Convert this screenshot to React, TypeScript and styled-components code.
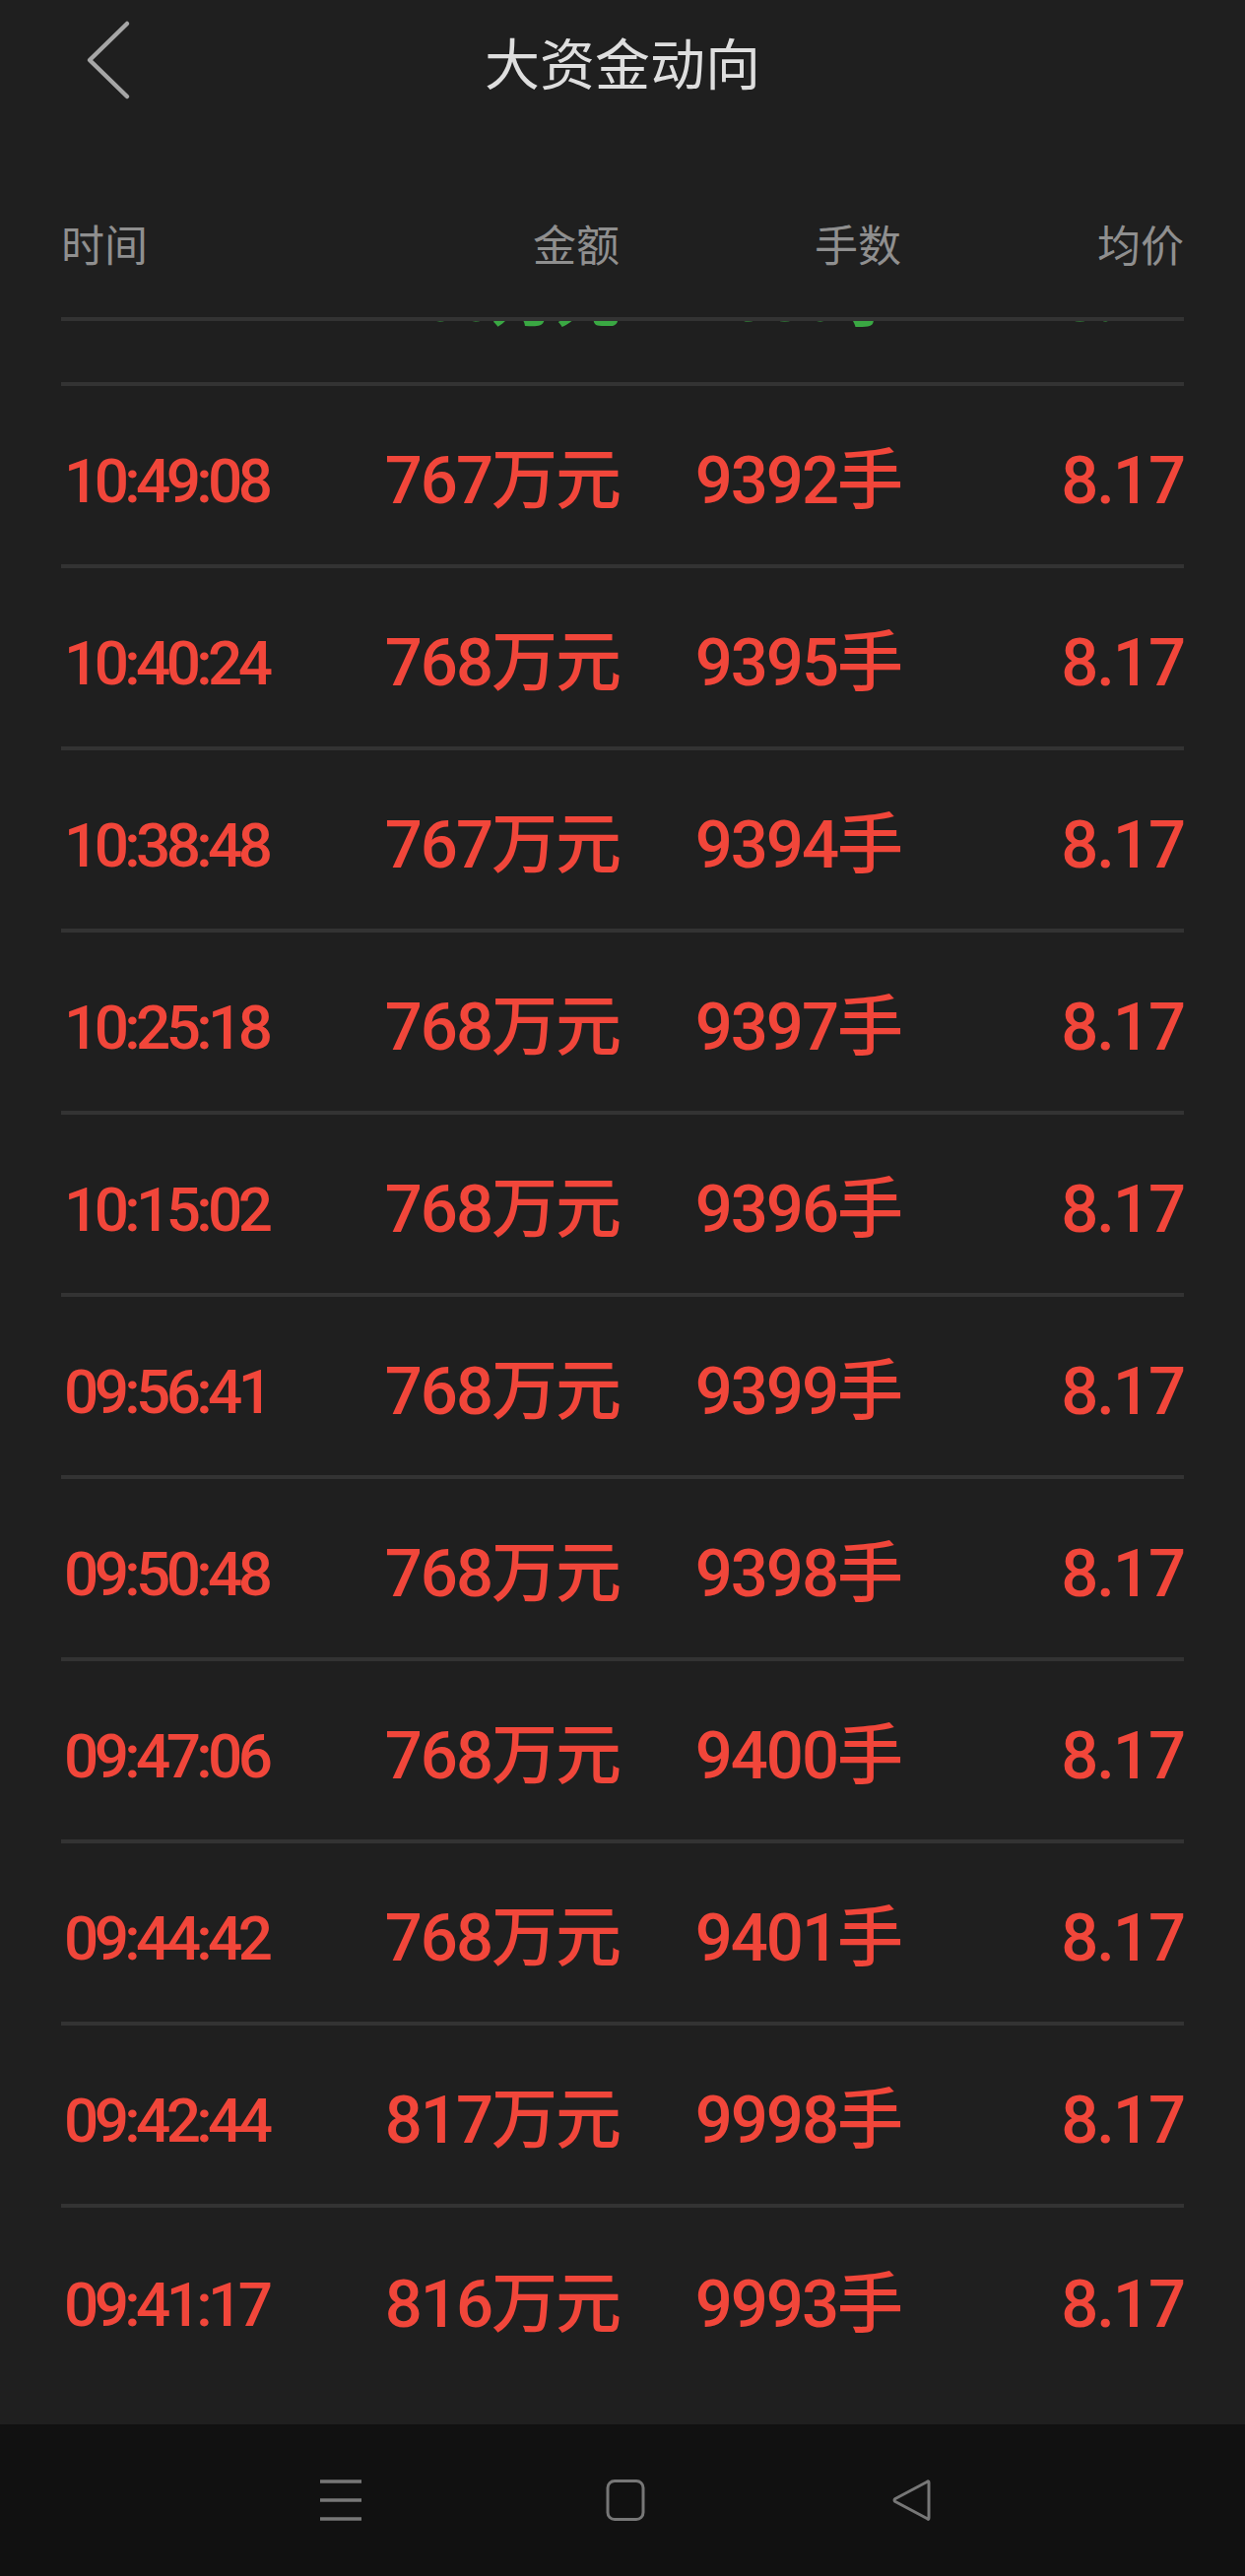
import React from "react";
import styled, { createGlobalStyle } from "styled-components";

const GlobalStyle = createGlobalStyle`
  html, body {
    margin: 0;
    padding: 0;
    background: #1f1f1f;
  }
  #root {
    width: 1264px;
  }
`;

const Page = styled.div`
  width: 1264px;
  height: 2616px;
  display: flex;
  flex-direction: column;
  background: #1f1f1f;
  font-family: Roboto, "Noto Sans CJK SC", sans-serif;
  overflow: hidden;
`;

const TopBar = styled.div`
  height: 124px;
  margin-bottom: 46px;
  display: flex;
  align-items: center;
  justify-content: center;
  position: relative;
  flex-shrink: 0;
`;

const BackButton = styled.button`
  position: absolute;
  left: 84px;
  top: 20px;
  width: 52px;
  height: 82px;
  padding: 0;
  border: none;
  background: transparent;
  display: flex;
  align-items: center;
  justify-content: center;
`;

const Title = styled.h1`
  margin: 0;
  font-family: "Noto Sans CJK SC", sans-serif;
  font-weight: 400;
  font-size: 56px;
  line-height: 1;
  color: #dedede;
  letter-spacing: 0;
`;

const TableHeader = styled.div`
  height: 152px;
  margin: 0 62px;
  border-bottom: 4px solid #333333;
  display: grid;
  grid-template-columns: 281px 286px 286px 1fr;
  align-items: center;
  flex-shrink: 0;
`;

const HeadCell = styled.div<{ $align: "left" | "right" }>`
  text-align: ${(p) => p.$align};
  font-family: "Noto Sans CJK SC", sans-serif;
  font-size: 44px;
  line-height: 1;
  color: #8f8f8f;
  padding-top: 2px;
`;

const Viewport = styled.div`
  flex: 1;
  overflow: hidden;
`;

const List = styled.div`
  margin: -119px 62px 0;
`;

const Row = styled.div<{ $last?: boolean }>`
  box-sizing: border-box;
  height: 185px;
  padding-top: 12px;
  border-bottom: ${(p) => (p.$last ? "none" : "4px solid #333333")};
  display: grid;
  grid-template-columns: 281px 286px 286px 1fr;
  align-items: center;
`;

const TimeCell = styled.div<{ $color: string }>`
  color: ${(p) => p.$color};
  font-size: 62px;
  font-weight: 500;
  line-height: 1;
  letter-spacing: -4.6px;
  padding-left: 3px;
  white-space: nowrap;
`;

const ValueCell = styled.div<{ $color: string }>`
  color: ${(p) => p.$color};
  text-align: right;
  font-size: 67px;
  font-weight: 500;
  line-height: 1;
  letter-spacing: -2px;
  white-space: nowrap;
`;

const NavBar = styled.div`
  height: 154px;
  background: #111111;
  display: flex;
  align-items: center;
  justify-content: center;
  gap: 248px;
  flex-shrink: 0;
  padding-left: 8px;
`;

const NavIcon = styled.div`
  width: 42px;
  height: 42px;
  display: flex;
  align-items: center;
  justify-content: center;
`;

type Trade = { time: string; amount: string; hands: string; price: string };

const GREEN = "#3aa843";
const RED = "#f1463a";

const hiddenTrade: Trade = { time: "10:52:38", amount: "766万元", hands: "9380手", price: "8.17" };

const trades: Trade[] = [
  { time: "10:49:08", amount: "767万元", hands: "9392手", price: "8.17" },
  { time: "10:40:24", amount: "768万元", hands: "9395手", price: "8.17" },
  { time: "10:38:48", amount: "767万元", hands: "9394手", price: "8.17" },
  { time: "10:25:18", amount: "768万元", hands: "9397手", price: "8.17" },
  { time: "10:15:02", amount: "768万元", hands: "9396手", price: "8.17" },
  { time: "09:56:41", amount: "768万元", hands: "9399手", price: "8.17" },
  { time: "09:50:48", amount: "768万元", hands: "9398手", price: "8.17" },
  { time: "09:47:06", amount: "768万元", hands: "9400手", price: "8.17" },
  { time: "09:44:42", amount: "768万元", hands: "9401手", price: "8.17" },
  { time: "09:42:44", amount: "817万元", hands: "9998手", price: "8.17" },
  { time: "09:41:17", amount: "816万元", hands: "9993手", price: "8.17" },
];

const TradeRow = ({ t, color, last }: { t: Trade; color: string; last?: boolean }) => (
  <Row $last={last}>
    <TimeCell $color={color}>{t.time}</TimeCell>
    <ValueCell $color={color}>{t.amount}</ValueCell>
    <ValueCell $color={color}>{t.hands}</ValueCell>
    <ValueCell $color={color}>{t.price}</ValueCell>
  </Row>
);

export default function App() {
  return (
    <>
      <GlobalStyle />
      <Page>
        <TopBar>
          <BackButton aria-label="返回">
            <svg width="52" height="82" viewBox="0 0 52 82">
              <polyline
                points="45,4 7,41 45,78"
                fill="none"
                stroke="#a6a6a6"
                strokeWidth="4.5"
                strokeLinecap="round"
                strokeLinejoin="round"
              />
            </svg>
          </BackButton>
          <Title>大资金动向</Title>
        </TopBar>
        <TableHeader>
          <HeadCell $align="left">时间</HeadCell>
          <HeadCell $align="right">金额</HeadCell>
          <HeadCell $align="right">手数</HeadCell>
          <HeadCell $align="right">均价</HeadCell>
        </TableHeader>
        <Viewport>
          <List>
            <TradeRow t={hiddenTrade} color={GREEN} />
            {trades.map((t, i) => (
              <TradeRow key={t.time} t={t} color={RED} last={i === trades.length - 1} />
            ))}
          </List>
        </Viewport>
        <NavBar>
          <NavIcon>
            <svg width="42" height="42" viewBox="0 0 42 42">
              <g stroke="#777" strokeWidth="3.4">
                <line x1="0" y1="2" x2="42" y2="2" />
                <line x1="0" y1="21" x2="42" y2="21" />
                <line x1="0" y1="40" x2="42" y2="40" />
              </g>
            </svg>
          </NavIcon>
          <NavIcon>
            <svg width="42" height="42" viewBox="0 0 42 42">
              <rect x="2" y="1.5" width="36" height="39" rx="7" fill="none" stroke="#777" strokeWidth="3" />
            </svg>
          </NavIcon>
          <NavIcon>
            <svg width="42" height="42" viewBox="0 0 42 42">
              <path
                d="M38 3 L38 39 Q38 41.5 36 39.5 L4 22.5 Q2 21 4 19.5 L36 2.5 Q38 1 38 3 Z"
                fill="none"
                stroke="#777"
                strokeWidth="3"
                strokeLinejoin="round"
              />
            </svg>
          </NavIcon>
        </NavBar>
      </Page>
    </>
  );
}
